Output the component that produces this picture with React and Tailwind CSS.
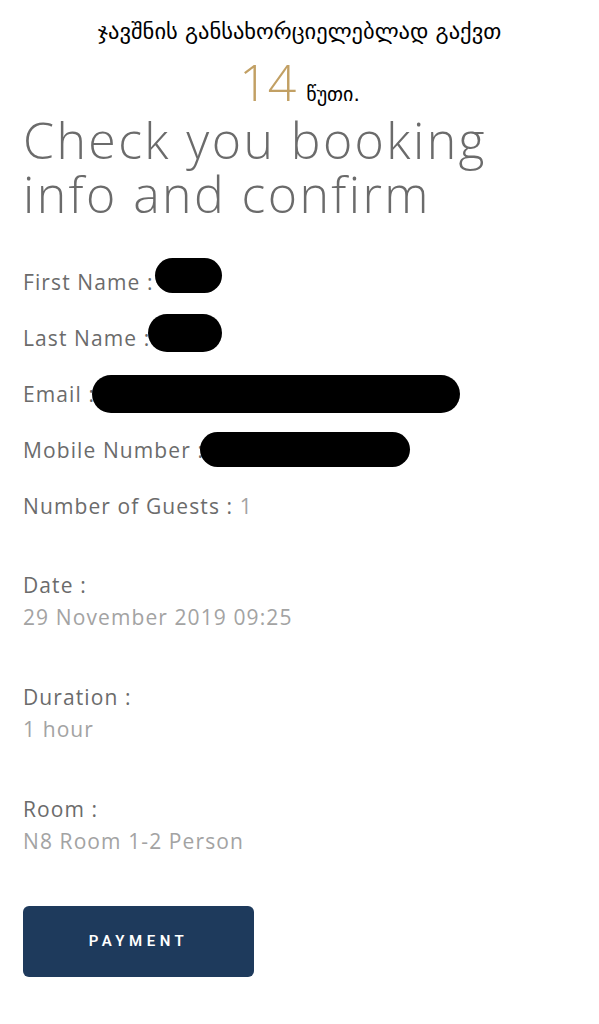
import React from "react";

const Blob = ({ className }) => (
  <span className={"absolute bg-black rounded-full " + className} />
);

const Field = ({ label, value, blob }) => (
  <div className="relative h-[56px] flex items-center">
    <span className="text-[21px] tracking-[1.1px] text-[#6b6b6b]">
      {label}
      {value && <span className="text-[#a3a3a3]">{value}</span>}
    </span>
    {blob && <Blob className={blob} />}
  </div>
);

const Group = ({ label, value }) => (
  <div className="flex flex-col">
    <div className="h-[32px] flex items-center text-[21px] tracking-[1.1px] text-[#6b6b6b]">{label}</div>
    <div className="h-[32px] flex items-center text-[21px] tracking-[1.1px] text-[#a3a3a3]">{value}</div>
  </div>
);

export default function App() {
  return (
    <div className="w-[599px] min-h-[1024px] bg-white px-[23px] font-['Open_Sans',sans-serif]">
      <div className="pt-[16px] h-[46px] leading-[30px] text-center text-[22.5px] text-black font-['DejaVu_Sans',sans-serif]">
        ჯავშნის განსახორციელებლად გაქვთ
      </div>
      <div className="mt-[14px] h-[44px] flex items-baseline justify-center gap-[10px]">
        <span className="text-[50px] font-light text-[#c2a064] leading-[44px]">14</span>
        <span className="text-[20px] leading-[24px] text-black font-['DejaVu_Sans',sans-serif]">წუთი.</span>
      </div>
      <div className="mt-[9px] text-[50px] leading-[54px] text-[#6b6b6b] font-light tracking-[2.4px]">
        <div>Check you booking</div>
        <div>info and confirm</div>
      </div>
      <div className="mt-[34px]">
        <Field label="First Name :" blob="left-[132px] top-[3px] w-[67px] h-[35px]" />
        <Field label="Last Name :" blob="left-[125px] top-[3px] w-[74px] h-[38px]" />
        <Field label="Email :" blob="left-[69px] top-[8px] w-[368px] h-[38px]" />
        <Field label="Mobile Number :" blob="left-[177px] top-[9px] w-[210px] h-[35px]" />
        <Field label="Number of Guests : " value="1" />
      </div>
      <div className="mt-[35px] flex flex-col gap-[48px]">
        <Group label="Date :" value="29 November 2019 09:25" />
        <Group label="Duration :" value="1 hour" />
        <Group label="Room :" value="N8 Room 1-2 Person" />
      </div>
      <button className="mt-[48px] w-[231px] h-[71px] rounded-[6px] bg-[#1e3a5c] text-white text-[15px] font-semibold tracking-[4.5px] font-['Roboto',sans-serif]">
        PAYMENT
      </button>
    </div>
  );
}
